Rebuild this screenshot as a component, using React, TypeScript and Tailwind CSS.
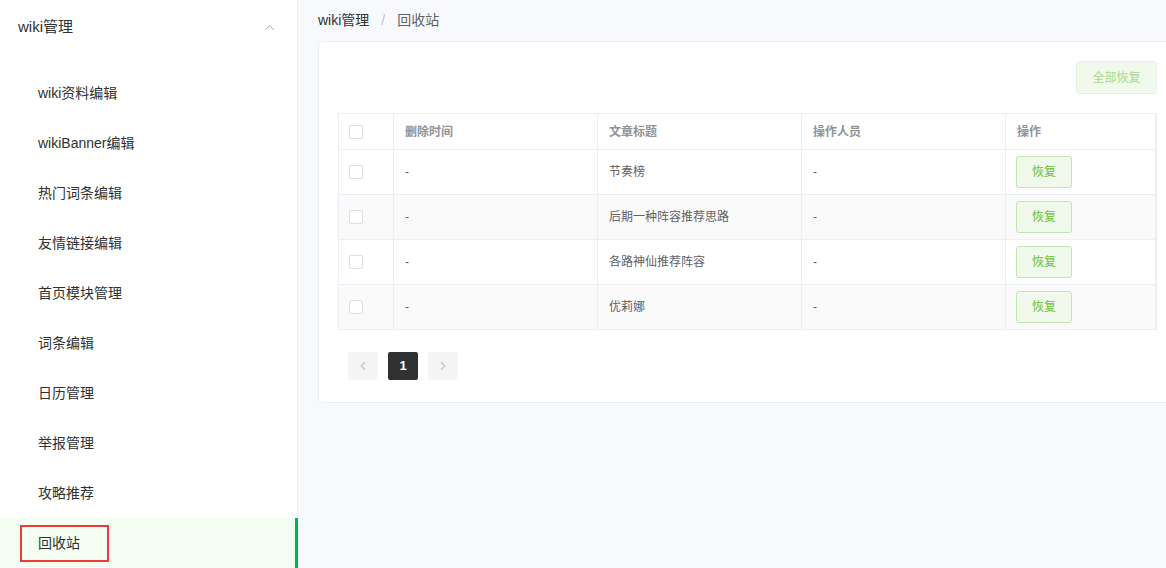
import { ChevronUp, ChevronLeft, ChevronRight } from "lucide-react"

const menu = [
  "wiki资料编辑",
  "wikiBanner编辑",
  "热门词条编辑",
  "友情链接编辑",
  "首页模块管理",
  "词条编辑",
  "日历管理",
  "举报管理",
  "攻略推荐",
  "回收站",
]

const rows = [
  { time: "-", title: "节奏榜", user: "-" },
  { time: "-", title: "后期一种阵容推荐思路", user: "-" },
  { time: "-", title: "各路神仙推荐阵容", user: "-" },
  { time: "-", title: "优莉娜", user: "-" },
]

function Checkbox() {
  return <span className="block w-[14px] h-[14px] rounded-[2px] border border-[#dcdfe6] bg-white" />
}

export default function App() {
  return (
    <div
      className="flex h-[568px] w-[1166px] overflow-hidden bg-[#f8f9fc] text-[#303133]"
      style={{ fontFamily: '"Liberation Sans", "Noto Sans CJK SC", sans-serif' }}
    >
      <aside className="w-[298px] shrink-0 bg-white border-r border-[#eef0f4] flex flex-col">
        <div className="h-[58px] flex items-center justify-between pl-[18px] pr-[20px]">
          <span className="text-[15px] text-[#303133]">wiki管理</span>
          <ChevronUp size={15} strokeWidth={1.5} className="text-[#9a9ea6]" />
        </div>
        <ul className="pt-[13px]">
          {menu.map((m) => {
            const active = m === "回收站"
            return (
              <li
                key={m}
                className={
                  active
                    ? "h-[50px] flex items-center bg-[#f3fdf1] border-r-[3px] border-[#00b54b] -mr-px"
                    : "h-[50px] flex items-center"
                }
              >
                {active ? (
                  <span className="ml-[20px] w-[89px] h-[37px] border-2 border-[#f03a3a] flex items-center pl-[16px] text-[14px]">
                    {m}
                  </span>
                ) : (
                  <span className="pl-[38px] text-[14px]">{m}</span>
                )}
              </li>
            )
          })}
        </ul>
      </aside>

      <main className="flex-1 min-w-0 pl-[20px]">
        <div className="h-[41px] flex items-center text-[14px]">
          <span className="text-[#303133]">wiki管理</span>
          <span className="mx-[12px] text-[#c0c4cc]">/</span>
          <span className="text-[#606266]">回收站</span>
        </div>
        <div className="w-[900px] h-[362px] bg-white border border-[#ebeef5] rounded-[4px] pt-[19px] pl-[19px]">
          <div className="w-[819px] flex justify-end">
            <button className="w-[81px] h-[33px] rounded-[4px] border border-[#e1f3d8] bg-[#f0f9eb] text-[12px] text-[#a4da89]">
              全部恢复
            </button>
          </div>
          <table className="mt-[19px] w-[819px] border-collapse border border-[#ebeef5] text-[12px] table-fixed">
            <thead>
              <tr className="h-[36px] text-[#909399] font-bold text-left">
                <th className="w-[55px] border border-[#ebeef5] pl-[10px]">
                  <Checkbox />
                </th>
                <th className="w-[204px] border border-[#ebeef5] pl-[11px]">删除时间</th>
                <th className="w-[204px] border border-[#ebeef5] pl-[11px]">文章标题</th>
                <th className="w-[204px] border border-[#ebeef5] pl-[11px]">操作人员</th>
                <th className="border border-[#ebeef5] border-r-2 pl-[11px]">操作</th>
              </tr>
            </thead>
            <tbody>
              {rows.map((r, i) => (
                <tr key={r.title} className={i % 2 === 1 ? "h-[45px] bg-[#fafafa] text-[#606266]" : "h-[45px] bg-white text-[#606266]"}>
                  <td className="border border-[#ebeef5] pl-[10px]">
                    <Checkbox />
                  </td>
                  <td className="border border-[#ebeef5] pl-[11px]">{r.time}</td>
                  <td className="border border-[#ebeef5] pl-[11px]">{r.title}</td>
                  <td className="border border-[#ebeef5] pl-[11px]">{r.user}</td>
                  <td className="border border-[#ebeef5] border-r-2 pl-[10px]">
                    <button className="w-[56px] h-[32px] rounded-[3px] border border-[#c2e7b0] bg-[#f0f9eb] text-[#67c23a] text-[12px]">
                      恢复
                    </button>
                  </td>
                </tr>
              ))}
            </tbody>
          </table>
          <div className="mt-[22px] ml-[10px] flex gap-[10px]">
            <button className="w-[30px] h-[28px] rounded-[2px] bg-[#f4f4f5] flex items-center justify-center text-[#c0c4cc]">
              <ChevronLeft size={14} strokeWidth={2} />
            </button>
            <button className="w-[30px] h-[28px] rounded-[2px] bg-[#303133] text-white text-[13px] font-bold">1</button>
            <button className="w-[30px] h-[28px] rounded-[2px] bg-[#f4f4f5] flex items-center justify-center text-[#c0c4cc]">
              <ChevronRight size={14} strokeWidth={2} />
            </button>
          </div>
        </div>
      </main>
    </div>
  )
}
